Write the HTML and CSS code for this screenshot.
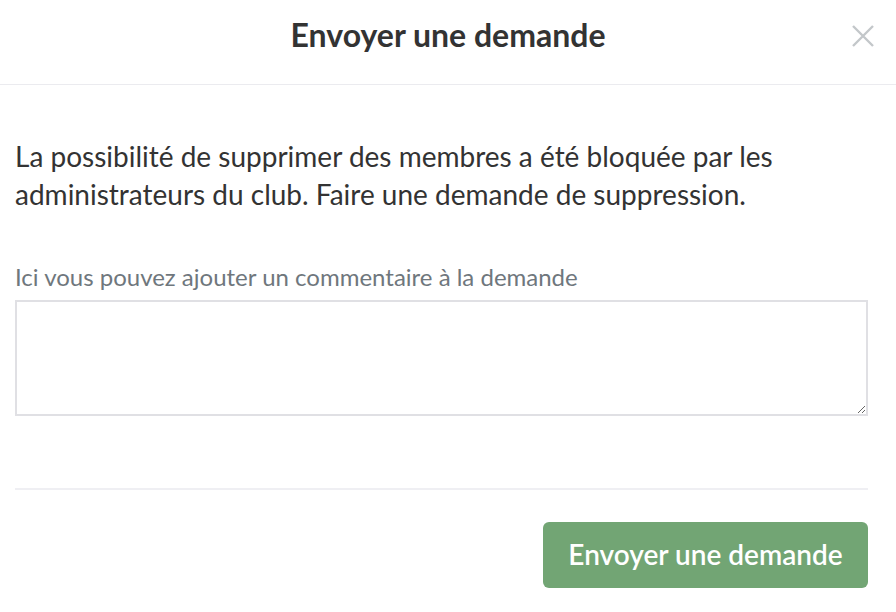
FILE: index.html
```html
<!DOCTYPE html>
<html lang="fr">
<head>
<meta charset="utf-8">
<link rel="stylesheet" href="styles.css">
</head>
<body>
<div class="modal">
  <div class="modal-header">
    <h1 class="modal-title">Envoyer une demande</h1>
    <button class="close" aria-label="Fermer">
      <svg width="24" height="24" viewBox="0 0 24 24"><path d="M2 2 L22 22 M22 2 L2 22" stroke="#c3c7ca" stroke-width="2.4" fill="none"/></svg>
    </button>
  </div>
  <div class="modal-body">
    <p class="message">La possibilité de supprimer des membres a été bloquée par les administrateurs du club. Faire une demande de suppression.</p>
    <label class="label" for="comment">Ici vous pouvez ajouter un commentaire à la demande</label>
    <textarea id="comment" class="textarea"></textarea>
  </div>
  <div class="modal-footer">
    <button class="btn">Envoyer une demande</button>
  </div>
</div>
</body>
</html>
```
FILE: styles.css
```css
* { box-sizing: border-box; }
html, body { margin: 0; padding: 0; background: #fff; }
body { font-family: Lato, "Open Sans", sans-serif; color: #333; width: 896px; height: 612px; overflow: hidden; }
.modal { display: flex; flex-direction: column; }
.modal-header {
  position: relative;
  height: 85px;
  border-bottom: 1px solid #ebebef;
  display: flex;
  align-items: center;
  justify-content: center;
}
.modal-title { margin: 0; font-size: 32px; font-weight: 700; color: #333; line-height: 1; padding-bottom: 14px; }
.close {
  position: absolute;
  right: 21px;
  top: 24px;
  background: none; border: 0; padding: 0; width: 24px; height: 24px; cursor: pointer;
}
.close svg { display: block; }
.modal-body { padding: 0 28px 0 15px; display: flex; flex-direction: column; }
.message { margin: 52px 0 0; font-size: 28px; line-height: 38px; color: #333; }
.label { margin-top: 50px; font-size: 24px; color: #6f777d; line-height: 28px; }
.textarea {
  margin-top: 9px;
  width: 853px; height: 116px;
  border: 2px solid #e0e0e4;
  border-radius: 0;
  resize: vertical;
  font-family: inherit;
}
.modal-footer {
  margin: 72px 28px 0 15px;
  border-top: 2px solid #efeff3;
  padding-top: 32px;
  display: flex; justify-content: flex-end;
}
.btn {
  width: 325px; height: 66px;
  background: #72a574; color: #fff;
  border: 0; border-radius: 6px;
  font-family: inherit; font-size: 28px; font-weight: 600;
  padding: 0 0 3px;
}
```
